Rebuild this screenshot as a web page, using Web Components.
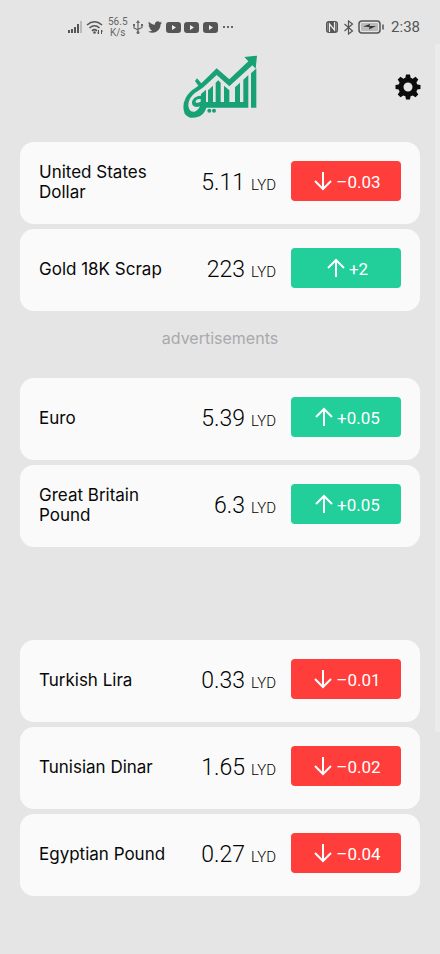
<!DOCTYPE html>
<html lang="en">
<head>
<meta charset="utf-8">
<meta name="viewport" content="width=device-width, initial-scale=1">
<title>Exchange rates</title>
<style>
html{background:#e5e5e5}
body{margin:0;font-family:Inter,"Noto Sans",sans-serif;color:#080808}
</style>
</head>
<body>
<rates-app></rates-app>

<template id="t-status">
<style>
:host{display:flex;align-items:center;justify-content:space-between;height:54px;padding:0 20px 0 67px;color:#555;font-family:Roboto,sans-serif}
div{display:flex;align-items:center}
svg{display:block;flex:none}
.left{gap:4px}
.speed{font-size:10px;line-height:11px;text-align:center;color:#666}
.right{gap:4px}
time{font-size:15px;margin-left:2px;color:#555}
</style>
<div class="left">
<svg width="15" height="14" viewBox="0 0 15 14" stroke-width="2"><path d="M2 13v-3M5 13V9M8 13V7M11 13V4" stroke="#555"/><path d="M14 13V1" stroke="#bbb"/></svg>
<svg width="18" height="15" viewBox="0 0 18 15" fill="none" stroke="#555" stroke-width="1.6"><path d="M1 5q7.500-6.500 15 0M3.500 8q5-4.500 10 0M6 10.800q2.500-2.200 5 0"/><circle cx="8.500" cy="12.500" r="1.300" fill="#555" stroke="none"/><path d="M12.500 10v4M15.500 10v4M11.500 12.500l1 1.500M16.500 11.500l-1-1.500" stroke-width="1"/></svg>
<div class="speed">56.5<br>K/s</div>
<svg width="12" height="14" viewBox="1 0 12 14" fill="none" stroke="#666" stroke-width="1.200"><path d="M7 2v10M3 5v3l4 2M11 5v2.500L7 9.500"/><path d="M7 0l2 3H5z" fill="#666" stroke="none"/><circle cx="7" cy="12.500" r="1.500" fill="#666" stroke="none"/><path d="M2 4h2v2H2zM10 4h2v2h-2z" fill="#666" stroke="none"/></svg>
<svg width="14" height="14" viewBox="0 0 24 24"><path fill="#555" d="M23.950 4.570a10 10 0 01-2.820.780 4.960 4.960 0 002.160-2.720c-.950.550-2 .950-3.130 1.180a4.920 4.920 0 00-8.380 4.480C7.690 8.100 4.070 6.130 1.640 3.160a4.820 4.820 0 00-.670 2.480c0 1.710.870 3.210 2.190 4.100a4.900 4.900 0 01-2.230-.620v.060a4.920 4.920 0 003.950 4.830 5 5 0 01-2.210.080 4.940 4.940 0 004.600 3.420A9.870 9.870 0 010 19.540a14 14 0 007.550 2.210c9.050 0 14-7.500 14-13.980l-.020-.630a9.940 9.940 0 002.420-2.570z"/></svg>
<svg width="52" height="11" viewBox="0 0 52 11"><g fill="#555"><rect width="15" height="11" rx="3"/><rect x="18" width="15" height="11" rx="3"/><rect x="37" width="15" height="11" rx="3"/></g><path fill="#eee" d="M6 3l4 2.500L6 8zM24 3l4 2.500L24 8zM43 3l4 2.500L43 8z"/></svg>
<svg width="12" height="4" viewBox="0 0 12 4" fill="#666"><path d="M1 1h2v2H1zM5 1h2v2H5zM9 1h2v2H9z"/></svg>
</div>
<div class="right">
<svg width="14" height="14" viewBox="0 0 14 14"><rect x="1" y="1" width="12" height="12" rx="3" fill="#555"/><path d="M4.500 12V4l5 6V2" stroke="#eee" stroke-width="1.200" fill="none"/><path d="M2.700 11V3M11.300 11V3" stroke="#aaa" stroke-width=".700"/></svg>
<svg width="11" height="15" viewBox="0 0 11 15" fill="none" stroke="#555" stroke-width="1.200"><path d="M1.500 4l8 7L5.500 14V1l4 3-8 7"/></svg>
<svg width="27" height="14" viewBox="0 0 27 14"><rect x="1" y="1" width="21" height="12" rx="3" fill="none" stroke="#555" stroke-width="1.500"/><rect x="3" y="3" width="17" height="8" rx="1" fill="#bbb"/><path d="M5 6.500l7-2.500-.500 2H18l-7 3.500.500-2.500z" fill="#333"/><path d="M25 4.500v5" stroke="#555" stroke-width="1.500"/></svg>
<time>2:38</time>
</div>
</template>

<template id="t-header">
<style>
:host{display:grid;grid-template-columns:1fr 90px 1fr;align-items:center;padding:0 19px 22px}
.logo{grid-column:2;display:block}
button{justify-self:end;width:26px;height:26px;padding:0;border:0;background:none;color:#0c0c0c}
button svg{display:block}
</style>
<svg class="logo" width="90" height="66" viewBox="-15 6 270 198" role="img" aria-label="Logo">
<g fill="#18a175">
<path d="M193 15L231 11L227 50L217 40L148 103L110 69L80 97Q68 109 55 116Q34 128 28 145Q22 161 28 172Q35 184 48 177Q57 171 60 163Q45 168 38 160Q33 150 40 141Q47 132 63 131V126L78 113V150H84V115L99 101V150H107V92L115 85L122 92V150H132V101L148 115V150H165V106L180 92V150H190V83L205 69V167H79Q73 188 53 195Q27 203 14 185Q5 162 17 138Q26 119 47 107L55 101L45 87L51 79L64 94L110 49L148 82L205 28ZM50 143Q44 148 49 152Q55 153 62 149V141Q55 140 50 143Z" fill-rule="evenodd"/>
<path d="M213 64L229 49V167H213Z"/>
<circle cx="88" cy="176" r="6"/><circle cx="102" cy="176" r="6"/>
</g>
</svg>
<button aria-label="Settings"><svg width="26" height="26" viewBox="0 0 26 26"><path fill="currentColor" fill-rule="evenodd" d="M11 .500h4l.600 3.300 2.100.900 2.800-1.900 2.800 2.800-1.900 2.800.900 2.100 3.200.500v4l-3.200.600-.900 2.100 1.900 2.800-2.800 2.800-2.800-1.900-2.100.900-.600 3.200h-4l-.600-3.200-2.100-.900-2.800 1.900-2.800-2.800 1.900-2.800-.900-2.100L.500 15v-4l3.200-.500.900-2.100-1.900-2.800 2.800-2.800 2.800 1.900 2.100-.900zM13 8.500a4.500 4.500 0 100 9 4.500 4.500 0 000-9z"/></svg></button>
</template>

<template id="t-row">
<style>
:host{display:grid;grid-template-columns:1fr auto 110px;align-items:center;column-gap:15px;box-sizing:border-box;min-height:82px;padding:0 19px;border-radius:14px;background:#fafafa}
.name{max-width:130px;padding-bottom:2px;font-size:17px;line-height:20px}
.value{padding-top:2px;font-family:Roboto,sans-serif;font-size:23px;font-weight:300;line-height:28px;white-space:nowrap;color:#000}
.unit{font-size:15px;margin-left:6px}
button{display:flex;align-items:center;justify-content:center;gap:3px;height:40px;margin:0 0 4px;padding:2px 0 0 2px;border:0;border-radius:4px;color:#fff;background:#ff3d3b;font:17px Roboto,sans-serif}
:host([trend=up]) button{background:#22ce9a}
:host([trend=up]) svg{transform:rotate(180deg)}
svg{display:block;margin-bottom:3px}
</style>
<span class="name"><slot></slot></span>
<span class="value"><span class="num"></span><span class="unit">LYD</span></span>
<button><svg width="20" height="20" viewBox="0 0 20 20" fill="none" stroke="#fff" stroke-width="2"><path d="M10 1v17M2 10l8 8 8-8"/></svg><span class="change"></span></button>
</template>

<template id="t-app">
<style>
:host{display:block;position:relative;min-height:100vh;background:#e5e5e5}
main{padding:0 20px 20px}
section{display:flex;flex-direction:column;gap:5px}
.wide{margin-top:93px}
.ad{padding:17px 0 30px;line-height:20px;text-align:center;font-size:16px;color:#a9a9ad}
.thumb{position:absolute;right:0;top:44px;width:5px;height:688px;background:#ebebeb}
</style>
<status-bar></status-bar>
<app-header></app-header>
<main>
<section>
<rate-row value="5.11" change="–0.03" trend="down">United States Dollar</rate-row>
<rate-row value="223" change="+2" trend="up">Gold 18K Scrap</rate-row>
</section>
<div class="ad">advertisements</div>
<section>
<rate-row value="5.39" change="+0.05" trend="up">Euro</rate-row>
<rate-row value="6.3" change="+0.05" trend="up">Great Britain Pound</rate-row>
</section>
<section class="wide">
<rate-row value="0.33" change="–0.01" trend="down">Turkish Lira</rate-row>
<rate-row value="1.65" change="–0.02" trend="down">Tunisian Dinar</rate-row>
<rate-row value="0.27" change="–0.04" trend="down">Egyptian Pound</rate-row>
</section>
</main>
<div class="thumb"></div>
</template>

<script>
class Base extends HTMLElement {
  constructor() {
    super();
    this.attachShadow({ mode: 'open' }).append(document.getElementById(this.constructor.template).content.cloneNode(true));
  }
}
class StatusBar extends Base { static template = 't-status'; }
class AppHeader extends Base { static template = 't-header'; }
class RateRow extends Base {
  static template = 't-row';
  connectedCallback() {
    this.shadowRoot.querySelector('.num').textContent = this.getAttribute('value');
    this.shadowRoot.querySelector('.change').textContent = this.getAttribute('change');
  }
}
class RatesApp extends Base { static template = 't-app'; }
customElements.define('status-bar', StatusBar);
customElements.define('app-header', AppHeader);
customElements.define('rate-row', RateRow);
customElements.define('rates-app', RatesApp);
</script>
</body>
</html>
